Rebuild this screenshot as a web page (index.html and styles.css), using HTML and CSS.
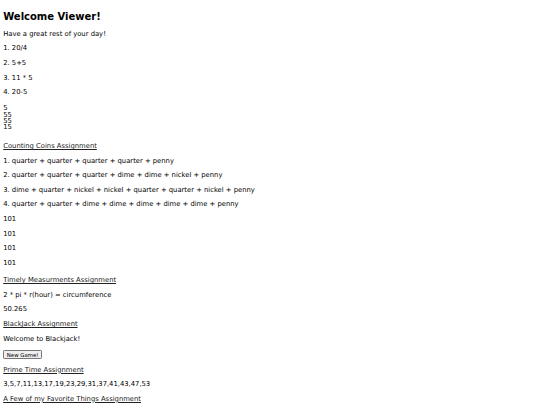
FILE: index.html
```html
<!DOCTYPE html>
<html>
<head>
<meta charset="utf-8">
<link rel="stylesheet" href="styles.css">
</head>
<body>
<h2 class="title">Welcome Viewer!</h2>
<p>Have a great rest of your day!</p>
<p>1. 20/4</p>
<p>2. 5+5</p>
<p>3. 11 * 5</p>
<p>4. 20-5</p>
<div class="answers">5<br>55<br>55<br>15</div>
<p class="section"><a class="link" href="#">Counting Coins Assignment</a></p>
<p>1. quarter + quarter + quarter + quarter + penny</p>
<p>2. quarter + quarter + quarter + dime + dime + nickel + penny</p>
<p>3. dime + quarter + nickel + nickel + quarter + quarter + nickel + penny</p>
<p>4. quarter + quarter + dime + dime + dime + dime + dime + penny</p>
<p>101</p>
<p>101</p>
<p>101</p>
<p>101</p>
<p class="gap"><a class="link" href="#">Timely Measurments Assignment</a></p>
<p>2 * pi * r(hour) = circumference</p>
<p>50.265</p>
<p><a class="link" href="#">BlackJack Assignment</a></p>
<p>Welcome to Blackjack!</p>
<button class="btn" type="button">New Game!</button>
<p class="after-btn"><a class="link" href="#">Prime Time Assignment</a></p>
<p>3,5,7,11,13,17,19,23,29,31,37,41,43,47,53</p>
<p><a class="link" href="#">A Few of my Favorite Things Assignment</a></p>
</body>
</html>
```

FILE: styles.css
```css
html, body {
  background: #fff;
}
body {
  margin: 3.2px;
  font-family: Verdana, "DejaVu Sans", sans-serif;
  font-size: 6.8px;
  line-height: 8px;
  color: #000;
}
.title {
  font-size: 10px;
  line-height: 11.6px;
  font-weight: bold;
  margin: 7.5px 0 7.6px;
}
p {
  margin: 6.6px 0;
}
.answers {
  line-height: 6.3px;
  margin-top: 9px;
}
.section {
  margin-top: 11.5px;
}
.gap {
  margin-top: 9.5px;
}
.link {
  color: #222;
  text-decoration: underline;
}
.btn {
  display: block;
  font-family: Verdana, "DejaVu Sans", sans-serif;
  font-size: 5.4px;
  line-height: 6.1px;
  padding: 0.4px 2.6px;
  margin: 7.6px 0 0;
  background: #efefef;
  border: 0.8px solid #767676;
  border-radius: 1.2px;
  color: #000;
}
.after-btn {
  margin-top: 6.6px;
}
```
